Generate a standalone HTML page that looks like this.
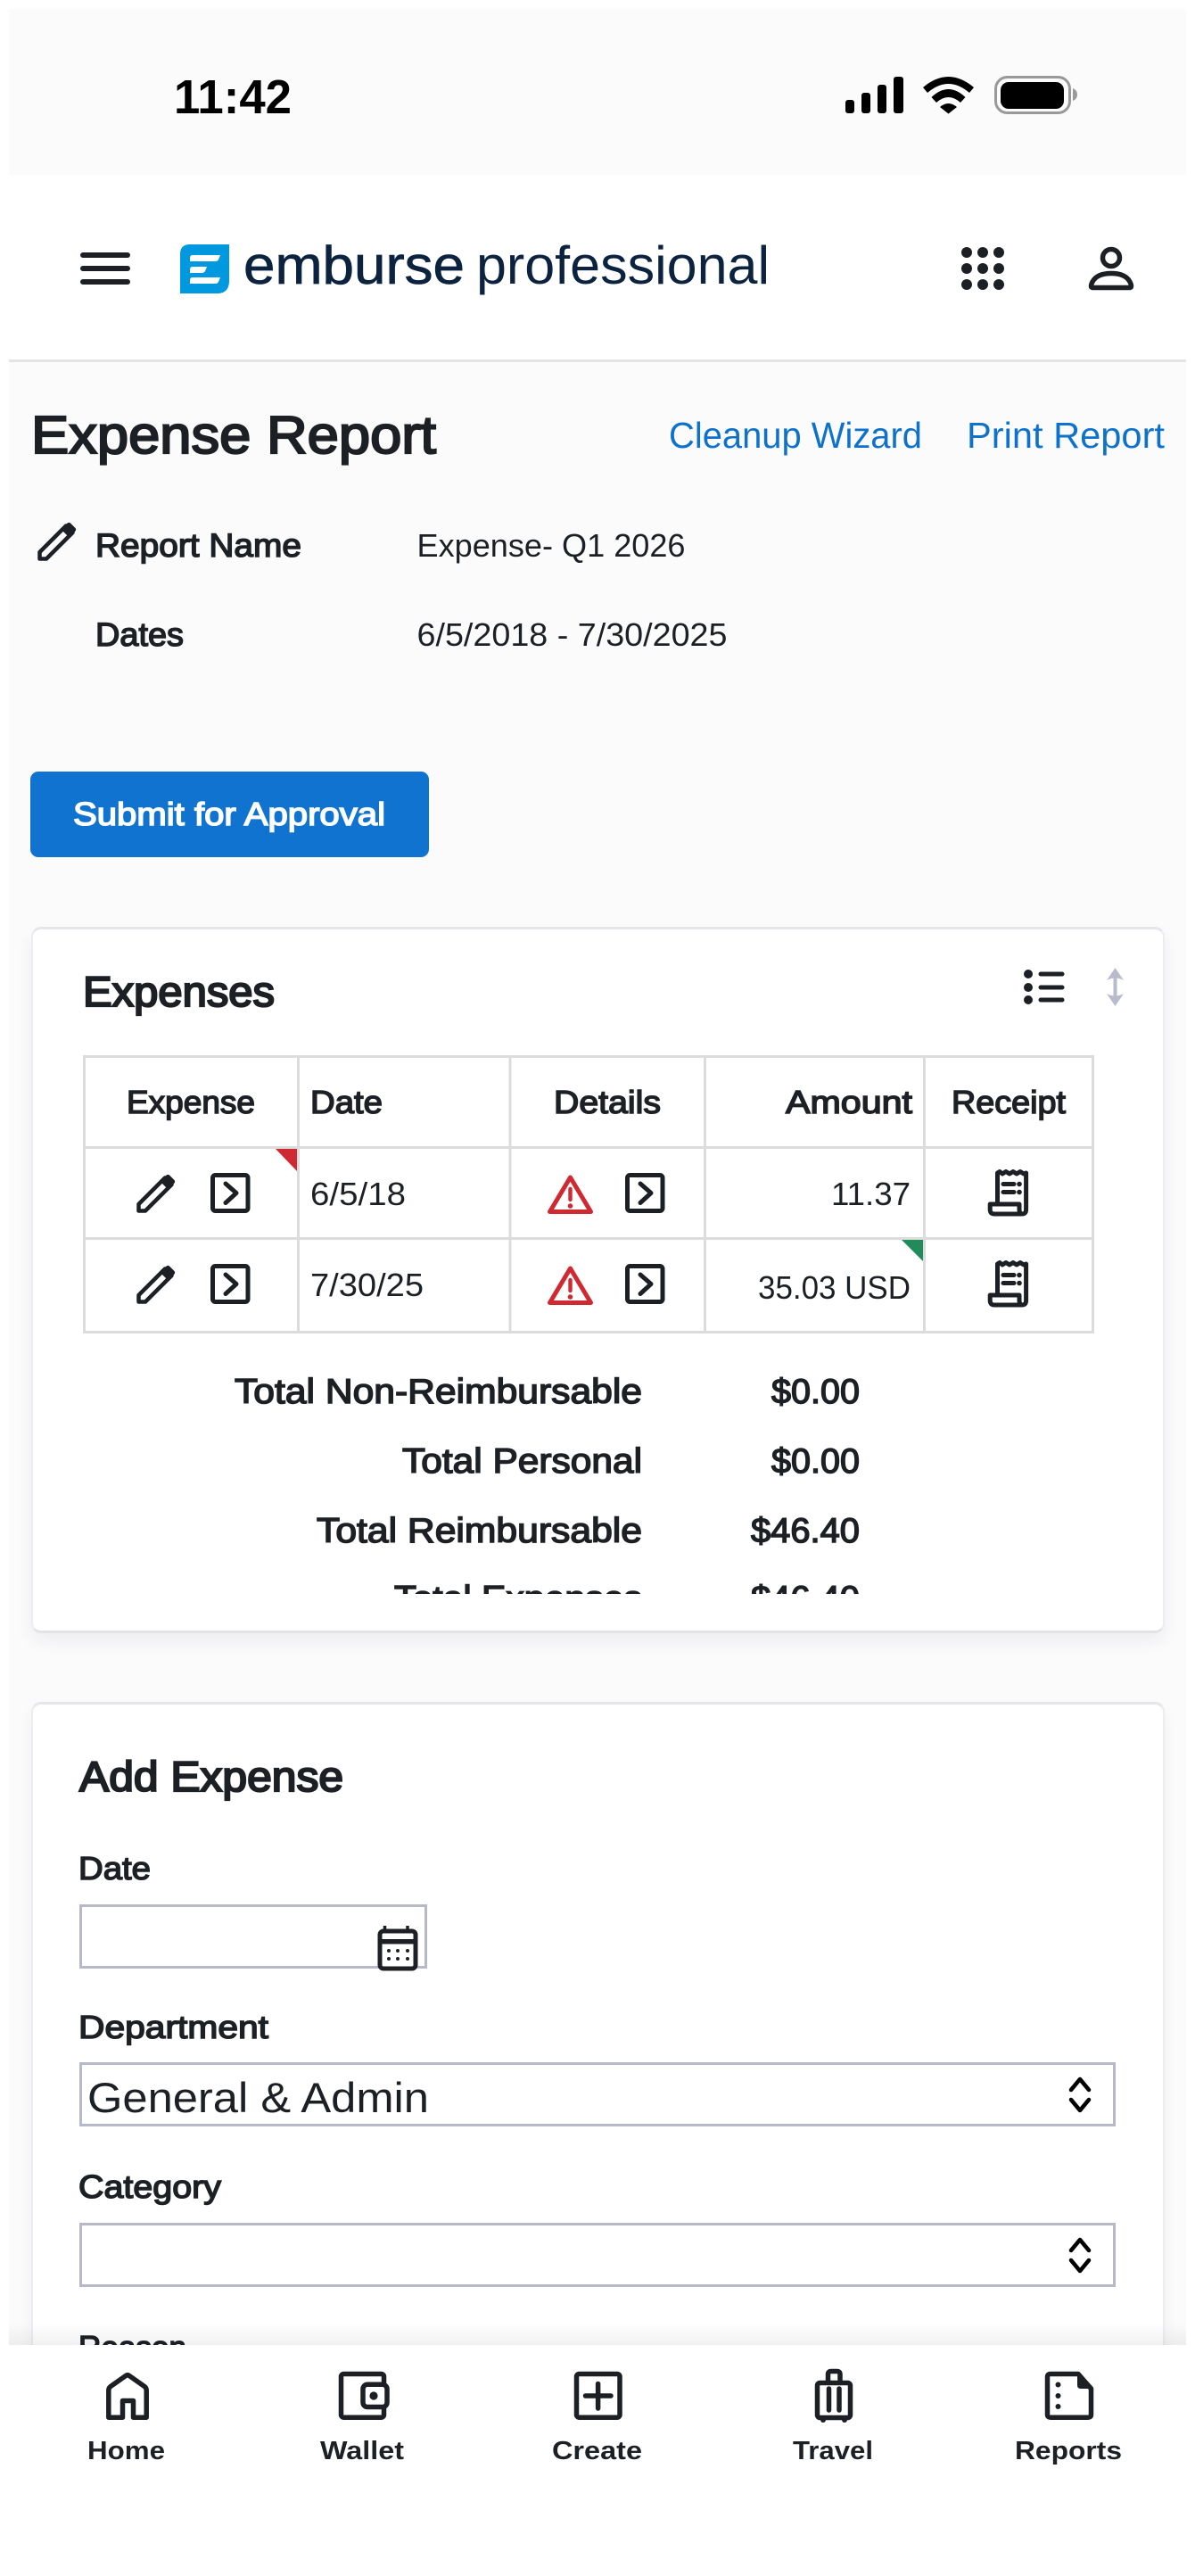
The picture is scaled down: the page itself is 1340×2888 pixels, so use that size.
<!DOCTYPE html>
<html lang="en"><head><meta charset="utf-8"><title>Expense Report</title>
<style>
html,body{margin:0;padding:0;background:#fff;width:1340px;height:2888px;overflow:hidden}
body{position:relative;font-family:"Liberation Sans",sans-serif}
.a{position:absolute;box-sizing:border-box}
svg{position:absolute;left:0;top:0}
text{font-family:"Liberation Sans",sans-serif;fill:#1c2025}
.s{stroke:#1c2025;stroke-width:1.5px}
.h{stroke:#1c2025;stroke-width:2.2px}
.b{font-weight:700}
.l{fill:#0e72cc}
.ic{fill:none;stroke:#1c2025;stroke-width:5;stroke-linejoin:round;stroke-linecap:round}
.nv{fill:none;stroke:#1c2025;stroke-width:5.5;stroke-linejoin:round;stroke-linecap:round}
</style></head><body>
<div class="a" style="left:10px;top:10px;width:1320px;height:186px;background:#fbfbfb"></div>
<div class="a" style="left:10px;top:403px;width:1320px;height:3px;background:#e4e4e4"></div>
<div class="a" style="left:10px;top:406px;width:1320px;height:2230px;background:#fbfbfc"></div>
<div class="a" style="left:34px;top:865px;width:447px;height:96px;background:#0f73cf;border-radius:9px"></div>
<div class="a" style="left:35px;top:1039px;width:1277px;height:792px;background:#fff;border:2px solid #ededf1;border-top:3px solid #e6e6ea;border-bottom:3px solid #e2e2e8;border-radius:11px;box-shadow:0 10px 18px rgba(40,40,60,.06);width:1271px"></div>
<div class="a" style="left:35px;top:1908px;height:800px;background:#fff;border:2px solid #ededf1;border-top:3px solid #e6e6ea;border-radius:11px;box-shadow:0 8px 16px rgba(40,40,60,.05);width:1271px"></div>

<svg width="1340" height="2888" viewBox="0 0 1340 2888" xmlns="http://www.w3.org/2000/svg">
<defs>
<clipPath id="c1"><rect x="36" y="1740" width="1268" height="47"/></clipPath>
<clipPath id="c2"><rect x="36" y="2600" width="1268" height="29"/></clipPath>
<linearGradient id="g" x1="0" y1="0" x2="0" y2="1"><stop offset="0" stop-color="#000" stop-opacity="0"/><stop offset="1" stop-color="#000" stop-opacity=".055"/></linearGradient>
<g id="pen"><path fill="none" stroke="#1c2025" stroke-width="4.5" stroke-linejoin="round" d="M3.5,42.5 V35 L33,5.5 L40.5,13 L11,42.5 Z"/><path fill="#1c2025" d="M28,10 L34,3 Q36,1 38,2.5 L43.5,8 Q45,10 43,12 L36,18 Z"/></g>
<g id="sq"><rect class="ic" x="2.5" y="2.5" width="39.5" height="40" rx="3"/><path class="ic" d="M17,12 L29,22.5 L17,33.5"/></g>
<g id="warn"><path fill="none" stroke="#cf2a32" stroke-width="5" stroke-linejoin="round" d="M25.5,4 L48.5,42.5 L2.5,42.5 Z"/><path stroke="#cf2a32" stroke-width="4.4" stroke-linecap="round" d="M25.5,17 V29"/><circle cx="25.5" cy="36" r="2.8" fill="#cf2a32"/></g>
<g id="rc"><path class="ic" style="stroke-linecap:butt" d="M10.5,35 V2 L13,0.5 L16,3 L20,0.5 L24,3 L28,0.5 L32,3 L36,0.5 L40,3 L42.6,2 V43 Q42.6,48 38,48 H7 Q2.2,48 2.2,43 V37 H35 V43 Q35,48 39,48"/><path class="ic" d="M17,14.5 H29 M17,23.5 H29"/><circle cx="35" cy="14.5" r="2.8" fill="#1c2025"/><circle cx="35" cy="23.5" r="2.8" fill="#1c2025"/></g>
</defs>

<!-- status bar -->
<text x="195" y="127" font-size="54" class="b" textLength="132" lengthAdjust="spacingAndGlyphs" style="fill:#000">11:42</text>
<g fill="#000"><rect x="948" y="112" width="10" height="15" rx="3"/><rect x="966" y="104" width="10" height="23" rx="3"/><rect x="984" y="95" width="10" height="32" rx="3"/><rect x="1002" y="86" width="11" height="41" rx="3"/>
<path d="M1035,98 Q1063.5,74 1092,98 L1087,104 Q1063.5,84 1040,104 Z M1044.5,109 Q1063.5,91 1082.5,109 L1077,115 Q1063.5,103 1050,115 Z M1054,120 Q1063.5,112 1073,120 L1063.5,127.5 Z"/>
<rect x="1122" y="92" width="71" height="30" rx="9"/></g>
<rect x="1116.5" y="86.5" width="83" height="40" rx="13" fill="none" stroke="#999" stroke-width="3"/>
<path d="M1203,99 Q1208,101 1208,106 Q1208,111 1203,113 Z" fill="#999"/>

<!-- header -->
<g stroke="#1c2025" stroke-width="6" stroke-linecap="round"><path d="M93,286 H143 M93,301 H143 M93,316 H143"/></g>
<path d="M213,274 H257 V315 Q257,329 243,329 H202 V285 Q202,274 213,274 Z" fill="#0099e0"/>
<g fill="#fff"><path d="M216,286 H247 L245,291 Q244,293 241,293 H213 L213,289 Q213,286 216,286 Z M216,299 H232 L230,304 Q229,306 226,306 H213 L213,302 Q213,299 216,299 Z M216,311 H247 L245,316 Q244,318 241,318 H213 L213,314 Q213,311 216,311 Z"/></g>
<text x="273" y="318" font-size="60" textLength="248" lengthAdjust="spacingAndGlyphs" style="fill:#0c2340;stroke:#0c2340;stroke-width:.7">emburse</text>
<text x="534" y="318" font-size="60" textLength="329" lengthAdjust="spacingAndGlyphs" style="fill:#0c2340">professional</text>
<g fill="#1c2025"><circle cx="1084" cy="283" r="6"/><circle cx="1102" cy="283" r="6"/><circle cx="1120" cy="283" r="6"/><circle cx="1084" cy="301" r="6"/><circle cx="1102" cy="301" r="6"/><circle cx="1120" cy="301" r="6"/><circle cx="1084" cy="319" r="6"/><circle cx="1102" cy="319" r="6"/><circle cx="1120" cy="319" r="6"/></g>
<circle cx="1246" cy="289" r="9.5" fill="none" stroke="#1c2025" stroke-width="5.5"/>
<path d="M1225,322.5 Q1222,322 1225,316 Q1230,306.5 1246,306.5 Q1262,306.5 1267,316 Q1270,322 1267,322.5 Z" fill="none" stroke="#1c2025" stroke-width="5.5" stroke-linejoin="round"/>

<!-- page head -->
<text x="35" y="508" font-size="59" class="h" textLength="454" lengthAdjust="spacingAndGlyphs">Expense Report</text>
<text x="750" y="502" font-size="41" class="l" textLength="284" lengthAdjust="spacingAndGlyphs">Cleanup Wizard</text>
<text x="1084" y="502" font-size="41" class="l" textLength="222" lengthAdjust="spacingAndGlyphs">Print Report</text>
<use href="#pen" transform="translate(41,584)"/>
<text x="107" y="624" font-size="37" class="s" textLength="231" lengthAdjust="spacingAndGlyphs">Report Name</text>
<text x="467.5" y="624" font-size="36" textLength="301" lengthAdjust="spacingAndGlyphs">Expense- Q1 2026</text>
<text x="107" y="724" font-size="37" class="s" textLength="99" lengthAdjust="spacingAndGlyphs">Dates</text>
<text x="467.5" y="724" font-size="36" textLength="348" lengthAdjust="spacingAndGlyphs">6/5/2018 - 7/30/2025</text>
<text x="82" y="925" font-size="36" class="s" textLength="350" lengthAdjust="spacingAndGlyphs" style="fill:#fff;stroke:#fff">Submit for Approval</text>

<!-- Expenses card -->
<text x="93" y="1128" font-size="47" class="h" textLength="215" lengthAdjust="spacingAndGlyphs">Expenses</text>
<g fill="#1c2025"><circle cx="1153" cy="1092" r="5"/><circle cx="1153" cy="1107" r="5"/><circle cx="1153" cy="1121" r="5"/></g>
<path d="M1167,1092 H1191 M1167,1107 H1191 M1167,1121 H1191" stroke="#1c2025" stroke-width="5" stroke-linecap="round"/>
<path d="M1250.5,1090 V1123" stroke="#b9bbca" stroke-width="4"/>
<path d="M1241,1099 L1250.5,1085 L1260,1099 Q1250.5,1094 1241,1099 Z M1241,1114 L1250.5,1128 L1260,1114 Q1250.5,1119 1241,1114 Z" fill="#b9bbca"/>

<!-- table -->
<g fill="#dcdcdc">
<rect x="93" y="1183" width="1134" height="3"/><rect x="93" y="1285" width="1134" height="3"/><rect x="93" y="1387" width="1134" height="3"/><rect x="93" y="1492" width="1134" height="3"/>
<rect x="93" y="1183" width="3" height="312"/><rect x="333" y="1183" width="3" height="312"/><rect x="570.5" y="1183" width="3" height="312"/><rect x="789" y="1183" width="3" height="312"/><rect x="1035" y="1183" width="3" height="312"/><rect x="1224" y="1183" width="3" height="312"/>
</g>
<text x="142" y="1248" font-size="36" class="s" textLength="144" lengthAdjust="spacingAndGlyphs">Expense</text>
<text x="348" y="1248" font-size="36" class="s" textLength="81" lengthAdjust="spacingAndGlyphs">Date</text>
<text x="621" y="1248" font-size="36" class="s" textLength="120" lengthAdjust="spacingAndGlyphs">Details</text>
<text x="881" y="1248" font-size="36" class="s" textLength="142" lengthAdjust="spacingAndGlyphs">Amount</text>
<text x="1067" y="1248" font-size="36" class="s" textLength="128" lengthAdjust="spacingAndGlyphs">Receipt</text>
<path d="M309,1288 H333 V1313 Z" fill="#cf2a32"/>
<path d="M1011,1390 H1035 V1414 Z" fill="#218b5b"/>
<use href="#pen" transform="translate(152,1315)"/><use href="#sq" transform="translate(236,1315)"/>
<use href="#warn" transform="translate(614,1316)"/><use href="#sq" transform="translate(701,1315)"/>
<use href="#rc" transform="translate(1108,1313)"/>
<use href="#pen" transform="translate(152,1417)"/><use href="#sq" transform="translate(236,1417)"/>
<use href="#warn" transform="translate(614,1418)"/><use href="#sq" transform="translate(701,1417)"/>
<use href="#rc" transform="translate(1108,1415)"/>
<text x="348" y="1351" font-size="36" textLength="107" lengthAdjust="spacingAndGlyphs">6/5/18</text>
<text x="348" y="1453" font-size="36" textLength="127" lengthAdjust="spacingAndGlyphs">7/30/25</text>
<text x="932" y="1351" font-size="36" textLength="89" lengthAdjust="spacingAndGlyphs">11.37</text>
<text x="850" y="1456" font-size="36" textLength="171" lengthAdjust="spacingAndGlyphs">35.03 USD</text>

<!-- totals -->
<text x="263" y="1573" font-size="39" class="s" textLength="457" lengthAdjust="spacingAndGlyphs">Total Non-Reimbursable</text>
<text x="865" y="1573" font-size="39" class="s" textLength="99" lengthAdjust="spacingAndGlyphs">$0.00</text>
<text x="451" y="1651" font-size="39" class="s" textLength="269" lengthAdjust="spacingAndGlyphs">Total Personal</text>
<text x="865" y="1651" font-size="39" class="s" textLength="99" lengthAdjust="spacingAndGlyphs">$0.00</text>
<text x="355" y="1729" font-size="39" class="s" textLength="365" lengthAdjust="spacingAndGlyphs">Total Reimbursable</text>
<text x="842" y="1729" font-size="39" class="s" textLength="122" lengthAdjust="spacingAndGlyphs">$46.40</text>
<g clip-path="url(#c1)"><text x="442" y="1805" font-size="39" class="s" textLength="278" lengthAdjust="spacingAndGlyphs">Total Expenses</text>
<text x="842" y="1805" font-size="39" class="s" textLength="122" lengthAdjust="spacingAndGlyphs">$46.40</text></g>

<!-- add expense -->
<text x="89" y="2008" font-size="47" class="h" textLength="296" lengthAdjust="spacingAndGlyphs">Add Expense</text>
<text x="88" y="2107" font-size="36" class="s" textLength="81" lengthAdjust="spacingAndGlyphs">Date</text>
<rect x="90.5" y="2136.5" width="387" height="69" fill="#fff" stroke="#b7b9c8" stroke-width="3"/>
<path d="M431.5,2159 V2166 M457,2159 V2166" stroke="#1c2025" stroke-width="3.5"/>
<rect x="426" y="2165" width="40" height="42" rx="4" fill="#fff" stroke="#1c2025" stroke-width="5"/>
<rect x="426" y="2174" width="40" height="5.5" fill="#1c2025"/>
<g fill="#1c2025"><circle cx="436" cy="2187" r="2"/><circle cx="446" cy="2187" r="2"/><circle cx="457" cy="2187" r="2"/><circle cx="436" cy="2196" r="2"/><circle cx="446" cy="2196" r="2"/><circle cx="457" cy="2196" r="2"/></g>
<text x="88" y="2285" font-size="36" class="s" textLength="213" lengthAdjust="spacingAndGlyphs">Department</text>
<rect x="90.5" y="2313.5" width="1159" height="69" fill="#fff" stroke="#b7b9c8" stroke-width="3"/>
<text x="98" y="2368" font-size="47" textLength="383" lengthAdjust="spacingAndGlyphs">General &amp; Admin</text>
<path d="M1201,2343 L1211,2331 L1221,2343 M1201,2354 L1211,2366 L1221,2354" fill="none" stroke="#000" stroke-width="4.5" stroke-linejoin="round" stroke-linecap="round"/>
<text x="88" y="2464" font-size="36" class="s" textLength="160" lengthAdjust="spacingAndGlyphs">Category</text>
<rect x="90.5" y="2493.5" width="1159" height="69" fill="#fff" stroke="#b7b9c8" stroke-width="3"/>
<path d="M1201,2523 L1211,2511 L1221,2523 M1201,2534 L1211,2546 L1221,2534" fill="none" stroke="#000" stroke-width="4.5" stroke-linejoin="round" stroke-linecap="round"/>
<g clip-path="url(#c2)"><text x="88" y="2644" font-size="36" class="s" textLength="121" lengthAdjust="spacingAndGlyphs">Reason</text></g>

<!-- bottom nav -->
<rect x="10" y="2604" width="1320" height="25" fill="url(#g)"/>
<rect x="0" y="2629" width="1340" height="259" fill="#fff"/>
<path class="nv" d="M121.8,2710.2 V2680 Q121.8,2677 124,2675.5 L141,2663.5 Q143,2662 145,2663.5 L162,2675.5 Q164.2,2677 164.2,2680 V2710.2 H149.5 V2691.5 H137.5 V2710.2 Z"/>
<rect class="nv" x="382.5" y="2661.5" width="48" height="48.7" rx="3"/>
<rect class="nv" x="407" y="2673.3" width="27" height="25.2" rx="5" style="fill:#fff"/>
<circle cx="419" cy="2686" r="4.6" fill="#1c2025"/>
<rect class="nv" x="646.5" y="2661.5" width="48.5" height="48.7" rx="3"/>
<path class="nv" d="M656.5,2686 H685 M670.6,2672.5 V2700"/>
<rect class="nv" x="916.5" y="2671.5" width="37" height="39" rx="3"/>
<path class="nv" d="M928.5,2671 V2662 Q928.5,2658.5 932,2658.5 H938.5 Q942,2658.5 942,2662 V2671"/>
<path class="nv" d="M929.5,2678 V2702 M941,2678 V2702"/>
<circle cx="923" cy="2713" r="3" fill="#1c2025"/><circle cx="947" cy="2713" r="3" fill="#1c2025"/>
<path class="nv" d="M1178,2661.5 H1209 L1223.5,2678 V2707 Q1223.5,2710.2 1220,2710.2 H1178 Q1174.5,2710.2 1174.5,2707 V2665 Q1174.5,2661.5 1178,2661.5 Z"/>
<path d="M1208,2661 L1225,2678 H1212 Q1208,2678 1208,2674 Z" fill="#1c2025"/>
<g fill="#1c2025"><circle cx="1186.5" cy="2673.5" r="3"/><circle cx="1186.5" cy="2686" r="3"/><circle cx="1186.5" cy="2698" r="3"/></g>
<text x="98" y="2757" font-size="29" class="b" textLength="87" lengthAdjust="spacingAndGlyphs">Home</text>
<text x="359" y="2757" font-size="29" class="b" textLength="94" lengthAdjust="spacingAndGlyphs">Wallet</text>
<text x="619" y="2757" font-size="29" class="b" textLength="101" lengthAdjust="spacingAndGlyphs">Create</text>
<text x="889" y="2757" font-size="29" class="b" textLength="90" lengthAdjust="spacingAndGlyphs">Travel</text>
<text x="1138" y="2757" font-size="29" class="b" textLength="120" lengthAdjust="spacingAndGlyphs">Reports</text>
</svg>
</body></html>
